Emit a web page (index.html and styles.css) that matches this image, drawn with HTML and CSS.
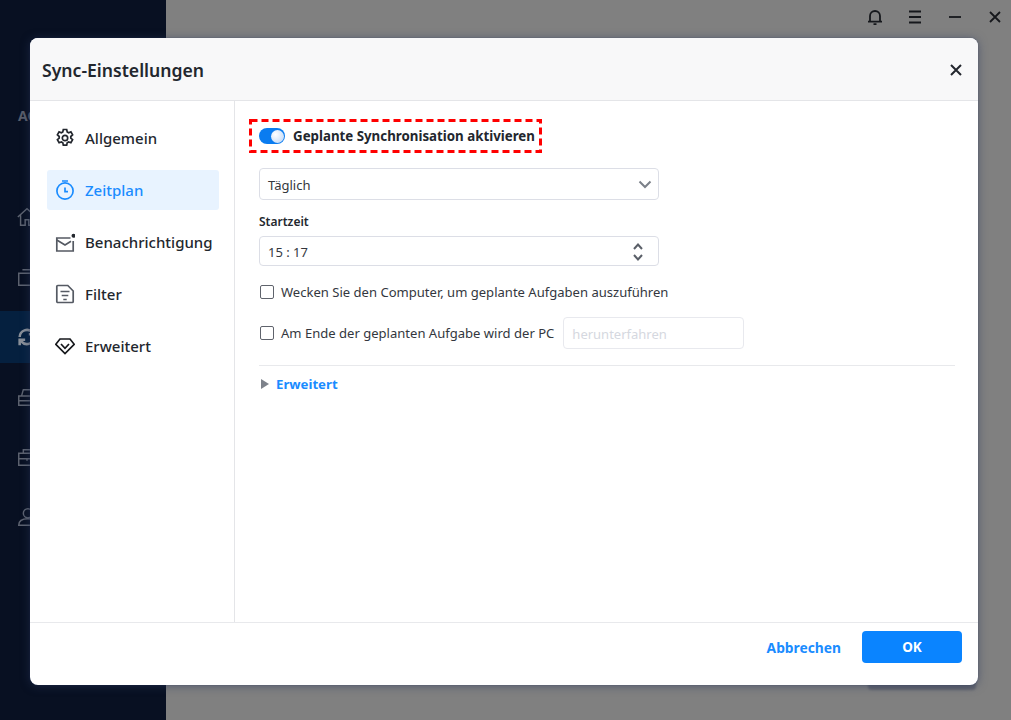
FILE: index.html
```html
<!DOCTYPE html>
<html lang="de">
<head>
<meta charset="utf-8">
<title>Sync-Einstellungen</title>
<link rel="stylesheet" href="styles.css">
</head>
<body>
<div class="app">
  <aside class="side">
    <div class="brand">AO</div>
    <ul class="side-list">
      <li class="side-item"><svg class="side-ico" viewBox="0 0 24 24"><path d="M2 12 12 3l10 9M5 10v11h5v-6h4v6h5V10"/></svg></li>
      <li class="side-item"><svg class="side-ico" viewBox="0 0 24 24"><path d="M3 8h16v13H3zM7 4h14v13"/></svg></li>
      <li class="side-item is-on"><svg class="side-ico thick" viewBox="0 0 24 24"><path d="M4 12a8 8 0 0 1 14-5l2 2M20 12a8 8 0 0 1-14 5l-2-2"/><path d="M20 3v6h-6M4 21v-6h6"/></svg></li>
      <li class="side-item"><svg class="side-ico" viewBox="0 0 24 24"><path d="M3 11h18v10H3zM3 16h18M6 11l2-7h13M13 18v.1"/></svg></li>
      <li class="side-item"><svg class="side-ico" viewBox="0 0 24 24"><path d="M3 8h18v13H3zM3 14h18M8 8V4h8v4M12 13v3"/></svg></li>
      <li class="side-item"><svg class="side-ico" viewBox="0 0 24 24"><circle cx="13" cy="8" r="5"/><path d="M3 21c0-5 4-7 10-7s10 2 10 7z"/></svg></li>
    </ul>
  </aside>
  <header class="top">
    <svg class="top-ico" viewBox="0 0 14 16"><path d="M2 12.500V7a5 5 0 0 1 10 0v5.500M0 12.700h14M5.500 15.200h3"/></svg>
    <svg class="top-ico" viewBox="0 0 14 16"><path d="M1 2.500h12M1 8h12M1 13.500h12"/></svg>
    <svg class="top-ico" viewBox="0 0 14 16"><path d="M1 8h12"/></svg>
    <svg class="top-ico" viewBox="0 0 14 16"><path d="m2 3 10 10M12 3 2 13"/></svg>
  </header>
</div>

<div class="under-edge"></div>

<section class="modal">
  <div class="modal-head">
    <h1 class="modal-title">Sync-Einstellungen</h1>
    <svg class="modal-close" viewBox="0 0 12 12"><path d="m1 1 10 10M11 1 1 11"/></svg>
  </div>
  <div class="modal-body">
    <nav class="nav">
      <a class="nav-item">
        <svg class="nav-ico" viewBox="0 0 20 20"><path d="M8.300 1.500h3.400l.5 2.400 1.400.8 2.300-.8 1.700 3-1.800 1.600v1.600l1.800 1.600-1.700 3-2.300-.8-1.400.8-.5 2.400H8.300l-.5-2.400-1.400-.8-2.300.8-1.700-3 1.800-1.600V8.500L2.400 6.900l1.700-3 2.300.8 1.400-.8z"/><circle cx="10" cy="10" r="2.700"/></svg>
        <span>Allgemein</span>
      </a>
      <a class="nav-item is-active">
        <svg class="nav-ico" viewBox="0 0 20 20"><circle cx="10" cy="11" r="8.100"/><path d="M7 1h6M10 7.500v4.200h3"/></svg>
        <span>Zeitplan</span>
      </a>
      <a class="nav-item">
        <svg class="nav-ico grey" viewBox="0 0 20 20"><path d="M15.500 6H1.800v13h16.400V9"/><path d="m1.800 8 8.200 5 6-3.700"/><circle class="dot" cx="18.500" cy="3.800" r="2"/></svg>
        <span>Benachrichtigung</span>
      </a>
      <a class="nav-item">
        <svg class="nav-ico grey" viewBox="0 0 20 20"><path d="M1.800 2.500a1 1 0 0 1 1-1h10L18.200 7v10.500a1 1 0 0 1-1 1H2.800a1 1 0 0 1-1-1z"/><path d="M5.500 7.500h9M6.700 11.500h6.600M8.300 15.500h3.400"/></svg>
        <span>Filter</span>
      </a>
      <a class="nav-item">
        <svg class="nav-ico dark" viewBox="0 0 20 20"><path d="M5 3h10l4.200 5.300L10 17.500.8 8.300z"/><path d="m6 8 4 4.300L14 8"/></svg>
        <span>Erweitert</span>
      </a>
    </nav>
    <div class="panel">
      <div class="toggle-row">
        <span class="switch"><span class="knob"></span></span>
        <span class="toggle-label">Geplante Synchronisation aktivieren</span>
        <svg class="dash-frame" viewBox="0 0 293 34"><rect x="1.500" y="1.500" width="290" height="31"/></svg>
      </div>
      <div class="field select">
        <span>Täglich</span>
        <svg class="chev" viewBox="0 0 14 9"><path d="m1.500 1.500 5.500 5.500 5.500-5.500"/></svg>
      </div>
      <label class="field-label">Startzeit</label>
      <div class="field time">
        <span>15 : 17</span>
        <span class="spin">
          <svg class="spin-ico" viewBox="0 0 10 7"><path d="m1 6 4-4.500L9 6"/></svg>
          <svg class="spin-ico" viewBox="0 0 10 7"><path d="m1 1 4 4.500L9 1"/></svg>
        </span>
      </div>
      <div class="check-row first">
        <span class="check"></span>
        <span>Wecken Sie den Computer, um geplante Aufgaben auszuführen</span>
      </div>
      <div class="check-row second">
        <span class="check"></span>
        <span>Am Ende der geplanten Aufgabe wird der PC</span>
        <span class="mini-input">herunterfahren</span>
      </div>
      <div class="rule"></div>
      <div class="adv">
        <span class="tri"></span>
        <span>Erweitert</span>
      </div>
    </div>
  </div>
  <div class="modal-foot">
    <a class="btn-link">Abbrechen</a>
    <a class="btn-ok">OK</a>
  </div>
</section>
</body>
</html>
```
FILE: styles.css
```css
* { box-sizing: border-box; }
html, body { margin: 0; height: 100%; overflow: hidden; }
body {
  font-family: "Noto Sans", "Open Sans", sans-serif;
  background: #808080;
  color: #23272e;
  position: relative;
}
.app { display: flex; height: 720px; }
.side { width: 166px; background: #081022; flex: none; }
.brand { margin: 106px 0 0 18px; height: 20px; color: #5a5f6b; font-weight: 700; font-size: 14px; line-height: 20px; }
.side-list { list-style: none; padding: 0; display: flex; flex-direction: column; margin: 61px 0 0; }
.side-item { height: 60px; display: flex; align-items: center; padding-left: 16px; }
.side-item.is-on { height: 52px; margin: 4px 0; background: #05203f; }
.side-ico { width: 22px; height: 22px; fill: none; stroke: #5d6370; stroke-width: 1.6; }
.side-ico.thick { stroke: #8a9099; stroke-width: 2.8; }
.top { flex: 1; display: flex; justify-content: flex-end; align-items: flex-start; gap: 26px; padding: 9px 9px 0 0; }
.top-ico { width: 14px; height: 16px; fill: none; stroke: #16181c; stroke-width: 1.8; }

.under-edge {
  position: absolute; left: 868px; top: 670px; width: 108px; height: 20px;
  background: rgba(60, 65, 85, .45); border-radius: 0 0 4px 4px; filter: blur(1px);
}
.modal {
  position: absolute; left: 30px; top: 38px; width: 948px; height: 647px;
  background: #fff; border-radius: 8px; overflow: hidden;
  display: flex; flex-direction: column;
  box-shadow: 0 1px 10px rgba(40, 55, 95, .55), 0 0 1px rgba(40, 55, 95, .8);
}
.modal-head {
  height: 63px; flex: none; background: #f8f8f9; border-bottom: 1px solid #e4e5e8;
  display: flex; align-items: center; justify-content: space-between;
  padding: 2px 16px 0 12px;
}
.modal-title { margin: 0; font-size: 17.6px; font-weight: 600; color: #23272e; }
.modal-close { width: 12px; height: 12px; fill: none; stroke: #23272e; stroke-width: 2; }
.modal-body { flex: 1; display: flex; min-height: 0; }
.nav {
  width: 205px; flex: none; border-right: 1px solid #e4e5e8;
  padding: 17px 15px 0 17px; display: flex; flex-direction: column; gap: 12px;
}
.nav-item {
  height: 40px; display: flex; align-items: center; gap: 10px; padding-left: 8px;
  border-radius: 3px; font-size: 15px; font-weight: 500; color: #23272e;
}
.nav-ico { width: 20px; height: 20px; flex: none; fill: none; stroke: #23272e; stroke-width: 1.7; }
.nav-ico.grey { stroke: #555a63; }
.nav-ico.dark { stroke: #16181c; }
.nav-ico .dot { fill: #23272e; stroke: none; }
.nav-item.is-active { background: #e8f3ff; color: #1a8cff; }
.is-active .nav-ico { stroke: #1a8cff; }

.panel { flex: 1; padding: 18px 23px 0 24px; display: flex; flex-direction: column; align-items: flex-start; }
.toggle-row {
  position: relative; margin-left: -10px; width: 293px; height: 34px;
  display: flex; align-items: center; gap: 8px; padding-left: 10px;
}
.dash-frame { position: absolute; inset: 0; width: 293px; height: 34px; fill: none; stroke: #f00; stroke-width: 3; stroke-dasharray: 7 4; }
.switch { width: 26px; height: 16px; border-radius: 8px; background: #0a7cf0; display: block; padding: 1.5px 1.5px 1.5px 11.5px; flex: none; }
.knob { display: block; width: 13px; height: 13px; border-radius: 50%; background: radial-gradient(circle at 35% 35%, #ffffff, #c6dcf8 80%); }
.toggle-label { font-size: 13.3px; font-weight: 700; color: #23272e; white-space: nowrap; }
.field {
  width: 400px; border: 1px solid #dcdee6; border-radius: 4px; display: flex; align-items: center;
  justify-content: space-between; font-size: 13px; color: #33373e; padding: 1px 6px 0 8px;
}
.select { height: 32px; margin-top: 15px; }
.chev { width: 14px; height: 9px; fill: none; stroke: #7b8089; stroke-width: 2; }
.field-label { font-size: 12px; font-weight: 600; margin-top: 13px; line-height: 18px; }
.time { height: 30px; margin-top: 5px; padding-right: 15px; }
.spin { display: flex; flex-direction: column; gap: 4px; }
.spin-ico { display: block; width: 10px; height: 7px; fill: none; stroke: #5a5f68; stroke-width: 2; }
.check-row { display: flex; align-items: center; font-size: 13.05px; color: #33373e; margin-left: 1px; }
.check-row.first { margin-top: 16px; height: 20px; }
.check-row.second { margin-top: 15px; height: 32px; }
.check { width: 14px; height: 14px; border: 1.5px solid #5f636c; border-radius: 2px; margin-right: 7px; flex: none; }
.mini-input { width: 181px; height: 32px; margin-left: 9px; border: 1px solid #e8e9ee; border-radius: 4px; color: #d5d8e0; padding-left: 8px; line-height: 32px; font-size: 13px; }
.rule { align-self: stretch; height: 1px; background: #e8e9ec; margin-top: 16px; }
.adv { display: flex; align-items: center; gap: 7px; margin-top: 9px; color: #1a8cff; font-size: 13.2px; font-weight: 700; }
.tri { width: 0; height: 0; border-left: 8px solid #7d828b; border-top: 5px solid transparent; border-bottom: 5px solid transparent; margin-left: 2px; }
.modal-foot {
  height: 63px; flex: none; border-top: 1px solid #e8e9ec; display: flex; align-items: center;
  justify-content: flex-end; gap: 21px; padding: 0 16px 15px 0;
}
.btn-link { color: #1a8cff; font-size: 13.8px; font-weight: 700; position: relative; top: 1px; }
.btn-ok { width: 100px; height: 32px; background: #0a84ff; color: #fff; border-radius: 4px; font-size: 13.5px; font-weight: 700; text-align: center; line-height: 32px; }
```
